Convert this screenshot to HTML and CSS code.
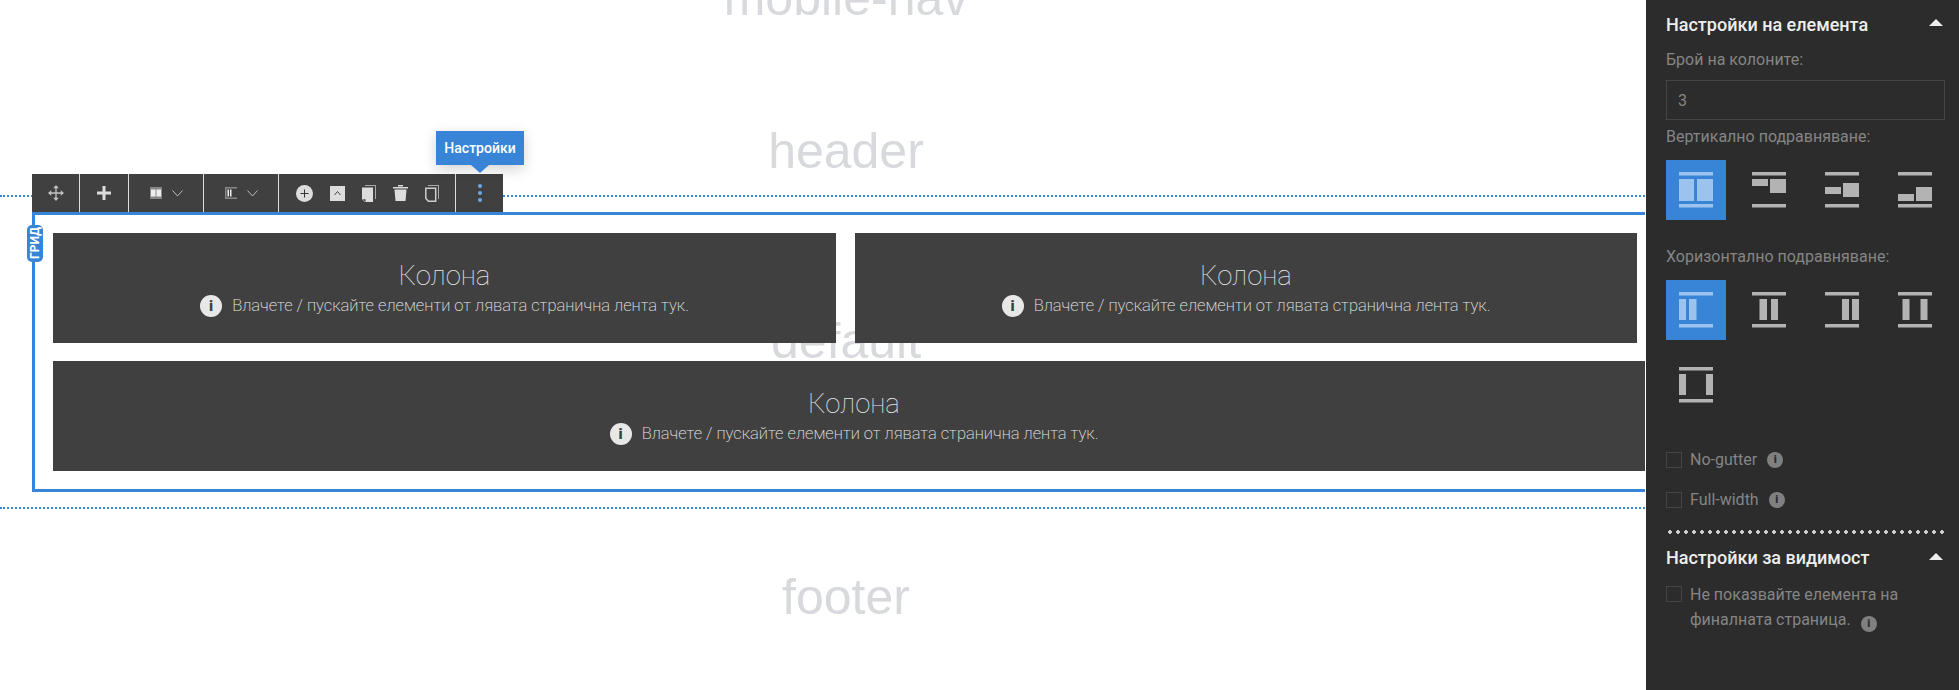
FILE: index.html
```html
<!DOCTYPE html>
<html lang="bg">
<head>
    <meta charset="UTF-8">
    <meta name="viewport" content="width=device-width, initial-scale=1.0">
    <title>Настройки на елемента</title>
    <link rel="stylesheet" href="styles.css">
</head>
<body>
    <main class="stage">
        <div class="zone zone-mobile"><span class="zone-name">mobile-nav</span></div>
        <div class="zone zone-header"><span class="zone-name">header</span></div>
        <div class="zone zone-default">
            <span class="zone-name zone-name-default">default</span>

            <div class="grid-box">
                <div class="grid-tag">ГРИД</div>

                <div class="toolbar">
                    <div class="tool tool-move">
                        <svg width="16" height="16" viewBox="0 0 16 16"><path d="M8 2v12M2 8h12" stroke="#c4c4c4" stroke-width="1.300" fill="none"/><path d="M8 0l2.800 3.200H5.200zM8 16l-2.800-3.200h5.600zM0 8l3.200-2.800v5.600zM16 8l-3.200 2.800V5.200z" fill="#c4c4c4"/></svg>
                    </div>
                    <div class="tool tool-plus">
                        <svg width="14" height="14" viewBox="0 0 14 14"><path d="M5.500 0h3v5.500H14v3H8.500V14h-3V8.500H0v-3h5.500z" fill="#ddd"/></svg>
                    </div>
                    <div class="tool tool-cols">
                        <svg width="12" height="12" viewBox="0 0 12 12"><rect width="12" height="12" fill="#888"/><rect x="1" y="2.500" width="4.500" height="7" fill="#eee"/><rect x="6.500" y="2.500" width="4.500" height="7" fill="#eee"/></svg>
                        <svg class="chev" width="11" height="7" viewBox="0 0 11 7"><path d="M.5.500l5 5.500 5-5.500" fill="none" stroke="#bbb"/></svg>
                    </div>
                    <div class="tool tool-align">
                        <svg width="12" height="12" viewBox="0 0 12 12"><path d="M0 0h12v1.500H0zM0 10.500h12V12H0zM0 1.500h1.500v9H0z" fill="#888"/><path d="M2.500 2.500H4v7H2.500zM5 2.500h1.500v7H5z" fill="#eee"/></svg>
                        <svg class="chev" width="11" height="7" viewBox="0 0 11 7"><path d="M.5.500l5 5.500 5-5.500" fill="none" stroke="#bbb"/></svg>
                    </div>
                    <div class="tool tool-actions">
                        <svg width="17" height="17" viewBox="0 0 17 17"><circle cx="8.500" cy="8.500" r="8.500" fill="#ddd"/><path d="M8 4.500h1V8h3.500v1H9v3.500H8V9H4.500V8H8z" fill="#333"/></svg>
                        <svg width="15" height="15" viewBox="0 0 15 15"><rect width="15" height="15" fill="#ddd"/><path d="M4.500 9l3-3.500 3 3.500" fill="none" stroke="#444"/></svg>
                        <svg width="14" height="17" viewBox="0 0 14 17"><path d="M3 0h11v14h-1V1H3z" fill="#aaa"/><path d="M0 2.500h11V17H3l-3-3z" fill="#ddd"/><path d="M1 14.300h2.500V17z" fill="#333"/></svg>
                        <svg width="15" height="16" viewBox="0 0 15 16"><path d="M0 2h15v1.500H0zM5 0h5v1.500H5z" fill="#ddd"/><path d="M1.500 4.500h12L12.500 16h-10z" fill="#ddd"/></svg>
                        <svg width="14" height="17" viewBox="0 0 14 17"><path d="M3 0h11v14h-1V1H3z" fill="#aaa"/><path d="M.8 3.300h9.900v13H3.500L.8 13.500z" fill="none" stroke="#ccc" stroke-width="1.500"/></svg>
                    </div>
                    <div class="tool tool-more">
                        <span class="more-dot"></span>
                        <span class="more-dot"></span>
                        <span class="more-dot"></span>
                        <div class="tooltip">Настройки</div>
                    </div>
                </div>

                <div class="cols">
                    <div class="col">
                        <div class="col-title">Колона</div>
                        <div class="col-hint"><span class="hint-icon">i</span>Влачете / пускайте елементи от лявата странична лента тук.</div>
                    </div>
                    <div class="col">
                        <div class="col-title">Колона</div>
                        <div class="col-hint"><span class="hint-icon">i</span>Влачете / пускайте елементи от лявата странична лента тук.</div>
                    </div>
                    <div class="col col-wide">
                        <div class="col-title">Колона</div>
                        <div class="col-hint"><span class="hint-icon">i</span>Влачете / пускайте елементи от лявата странична лента тук.</div>
                    </div>
                </div>
            </div>
        </div>
        <div class="zone zone-footer"><span class="zone-name">footer</span></div>
    </main>

    <aside class="panel">
        <div class="panel-head">
            <h2>Настройки на елемента</h2>
            <span class="caret"></span>
        </div>
        <label class="field-label" for="colCount">Брой на колоните:</label>
        <input class="field-input" type="text" id="colCount" value="3">

        <div class="field-label">Вертикално подравняване:</div>
        <div class="tiles tiles-v">
            <div class="tile active">
                <svg width="34" height="36" viewBox="0 0 34 36"><path d="M0 0h34v3.500H0zM0 32h34v3.500H0z"/><path d="M0 7h15v22H0zM18 7h16v22H18z"/></svg>
            </div>
            <div class="tile">
                <svg width="34" height="36" viewBox="0 0 34 36"><path d="M0 0h34v3.500H0zM0 32h34v3.500H0z"/><path d="M0 7h16v7H0zM18 7h16v14H18z"/></svg>
            </div>
            <div class="tile">
                <svg width="34" height="36" viewBox="0 0 34 36"><path d="M0 0h34v3.500H0zM0 32h34v3.500H0z"/><path d="M0 15h16v7H0zM18 11h16v14H18z"/></svg>
            </div>
            <div class="tile">
                <svg width="34" height="36" viewBox="0 0 34 36"><path d="M0 0h34v3.500H0zM0 32h34v3.500H0z"/><path d="M0 22h16v7H0zM18 15h16v14H18z"/></svg>
            </div>
        </div>

        <div class="field-label field-label-h">Хоризонтално подравняване:</div>
        <div class="tiles">
            <div class="tile active">
                <svg width="34" height="36" viewBox="0 0 34 36"><path d="M0 0h34v3.500H0zM0 32h34v3.500H0z"/><path d="M0 7h7v21H0zM10 7h7.500v21H10z"/></svg>
            </div>
            <div class="tile">
                <svg width="34" height="36" viewBox="0 0 34 36"><path d="M0 0h34v3.500H0zM0 32h34v3.500H0z"/><path d="M7.500 7H15v21H7.500zM19 7h7v21h-7z"/></svg>
            </div>
            <div class="tile">
                <svg width="34" height="36" viewBox="0 0 34 36"><path d="M0 0h34v3.500H0zM0 32h34v3.500H0z"/><path d="M17 7h7v21h-7zM27 7h7v21h-7z"/></svg>
            </div>
            <div class="tile">
                <svg width="34" height="36" viewBox="0 0 34 36"><path d="M0 0h34v3.500H0zM0 32h34v3.500H0z"/><path d="M4.500 7h7v21h-7zM22.500 7h7v21h-7z"/></svg>
            </div>
            <div class="tile">
                <svg width="34" height="36" viewBox="0 0 34 36"><path d="M0 0h34v3.500H0zM0 32h34v3.500H0z"/><path d="M0 7h7v21H0zM27 7h7v21h-7z"/></svg>
            </div>
        </div>

        <div class="check check-gutter"><span class="box"></span>No-gutter<span class="info">i</span></div>
        <div class="check check-full"><span class="box"></span>Full-width<span class="info">i</span></div>

        <div class="dots"></div>

        <div class="panel-head panel-head-second">
            <h2>Настройки за видимост</h2>
            <span class="caret"></span>
        </div>
        <div class="check check-visible">
            <span class="box"></span>
            <span>Не показвайте елемента на<br>финалната страница.<span class="info">i</span></span>
        </div>
    </aside>
</body>
</html>
```

FILE: styles.css
```css
html, body {
    margin: 0;
    height: 690px;
    overflow: hidden;
}

body {
    display: flex;
    background: #fff;
    font-family: Roboto, "Liberation Sans", sans-serif;
}

.stage {
    width: 1645px;
    height: 690px;
    flex-shrink: 0;
    overflow: hidden;
}

/* серые подписи зон */
.zone {
    display: flex;
    justify-content: center;
    position: relative;
    width: 1692px;
}

.zone-name {
    font-family: "Liberation Sans", Arial, sans-serif;
    font-size: 50px;
    line-height: 54px;
    color: #d8d9dd;
}

.zone-mobile {
    height: 25px;
    align-items: flex-end;
}

.zone-header {
    height: 170px;
    padding-top: 99px;
    box-sizing: border-box;
}

.zone-default {
    display: block;
    height: 314px;
    box-sizing: border-box;
    padding-top: 15px;
    border-top: 2px dotted #3885d8;
    border-bottom: 2px dotted #3885d8;
}

.zone-name-default {
    position: absolute;
    left: 0;
    right: 0;
    top: 117px;
    text-align: center;
}

.zone-footer {
    padding-top: 61px;
}

.grid-box {
    position: relative;
    box-sizing: border-box;
    height: 280px;
    margin-left: 32px;
    padding: 18px 0 0 18px;
    border: 3px solid #3885d8;
    border-right: none;
}

.grid-tag {
    position: absolute;
    left: -8px;
    top: 10px;
    width: 16px;
    height: 37px;
    border-radius: 5px;
    background: #3885d8;
    color: #fff;
    font-size: 12px;
    font-weight: 700;
    line-height: 16px;
    text-align: center;
    writing-mode: vertical-rl;
    transform: rotate(180deg);
}

.toolbar {
    position: absolute;
    left: -3px;
    top: -41px;
    display: flex;
    height: 38px;
    background: #404040;
}

.tool {
    display: flex;
    align-items: center;
    justify-content: center;
    box-sizing: border-box;
    border-right: 1px solid #ddd;
}

.tool-move { width: 48px; }
.tool-plus { width: 49px; }
.tool-cols { width: 75px; gap: 10px; }
.tool-align { width: 75px; gap: 10px; }
.tool-actions { width: 177px; gap: 17px; }

.tool-more {
    position: relative;
    width: 47px;
    flex-direction: column;
    gap: 3px;
    border-right: none;
}

.more-dot {
    width: 4px;
    height: 4px;
    border-radius: 50%;
    background: #6aa9e8;
}

.tooltip {
    position: absolute;
    left: -20px;
    top: -43px;
    width: 88px;
    height: 34px;
    background: #3885d8;
    box-shadow: 0 4px 14px rgba(0, 0, 0, 0.18);
    color: #fff;
    font-size: 14px;
    font-weight: 500;
    line-height: 34px;
    text-align: center;
}

.tooltip::after {
    content: "";
    position: absolute;
    left: 35px;
    top: 34px;
    border-left: 9px solid transparent;
    border-right: 9px solid transparent;
    border-top: 8px solid #3885d8;
}

.cols {
    position: relative;
    display: grid;
    grid-template-columns: 783px 782px;
    gap: 18px 19px;
    grid-template-rows: 110px 110px;
}

.col {
    background: #404040;
    color: #e8e8e8;
    text-align: center;
    padding-top: 28px;
    box-sizing: border-box;
}

.col-wide {
    grid-column: 1 / 3;
    width: 1602px;
}

.col-title {
    font-size: 27.500px;
    font-weight: 100;
    line-height: 30px;
}

.col-hint {
    display: flex;
    align-items: center;
    justify-content: center;
    margin-top: 4px;
    font-size: 16.500px;
    font-weight: 200;
    line-height: 22px;
}

.hint-icon {
    width: 22px;
    height: 22px;
    margin-right: 10px;
    border-radius: 50%;
    background: #e8e8e8;
    color: #404040;
    font-size: 15px;
    font-weight: 900;
    line-height: 22px;
}

/* правая панель */
.panel {
    width: 313px;
    height: 690px;
    margin-left: 1px;
    flex-shrink: 0;
    box-sizing: border-box;
    padding: 14px 14px 0 20px;
    background: #2c2c2c;
    color: #858585;
    font-size: 16px;
}

.panel-head {
    display: flex;
    align-items: center;
    justify-content: space-between;
    padding-right: 2px;
}

.panel-head h2 {
    margin: 0;
    color: #eee;
    font-size: 18px;
    font-weight: 500;
    line-height: 22px;
}

.caret {
    margin-bottom: 5px;
    border-left: 7px solid transparent;
    border-right: 7px solid transparent;
    border-bottom: 7px solid #eee;
}

.panel-head-second .caret {
    margin-bottom: 3px;
}

.field-label {
    display: block;
    margin-top: 13px;
    line-height: 22px;
}

.field-label-h {
    margin-top: 26px;
}

.field-input {
    display: block;
    box-sizing: border-box;
    width: 279px;
    height: 40px;
    margin-top: 9px;
    padding: 0 11px;
    border: 1px solid #444;
    background: transparent;
    color: #858585;
    font-family: inherit;
    font-size: 16px;
    outline: none;
}

.field-input + .field-label {
    margin-top: 6px;
}

.tiles {
    display: flex;
    flex-wrap: wrap;
    gap: 15px 13px;
    margin-top: 12px;
}

.tile {
    display: flex;
    align-items: center;
    justify-content: center;
    width: 60px;
    height: 60px;
}

.tile svg {
    fill: #b3b3b3;
}

.tile.active {
    background: #3885d8;
}

.tile.active svg {
    fill: #9cc3ee;
}

.check {
    display: flex;
    align-items: center;
    line-height: 25px;
}

.check-gutter { margin-top: 32px; }
.check-full { margin-top: 15px; }

.check-visible {
    align-items: flex-start;
    margin-top: 13px;
}

.box {
    width: 16px;
    height: 16px;
    margin-right: 8px;
    box-sizing: border-box;
    flex-shrink: 0;
    border: 1px solid #444;
}

.check-visible .box {
    margin-top: 4px;
}

.info {
    display: inline-block;
    width: 16px;
    height: 16px;
    margin-left: 10px;
    border-radius: 50%;
    background: #808080;
    color: #2c2c2c;
    font-size: 11px;
    font-weight: 900;
    line-height: 16px;
    text-align: center;
    vertical-align: -2px;
}

.dots {
    height: 4px;
    width: 279px;
    margin-top: 18px;
    background-image: radial-gradient(circle, #ccc 1.700px, transparent 2px);
    background-size: 8px 4px;
}

.panel-head-second {
    margin-top: 13px;
}
```
